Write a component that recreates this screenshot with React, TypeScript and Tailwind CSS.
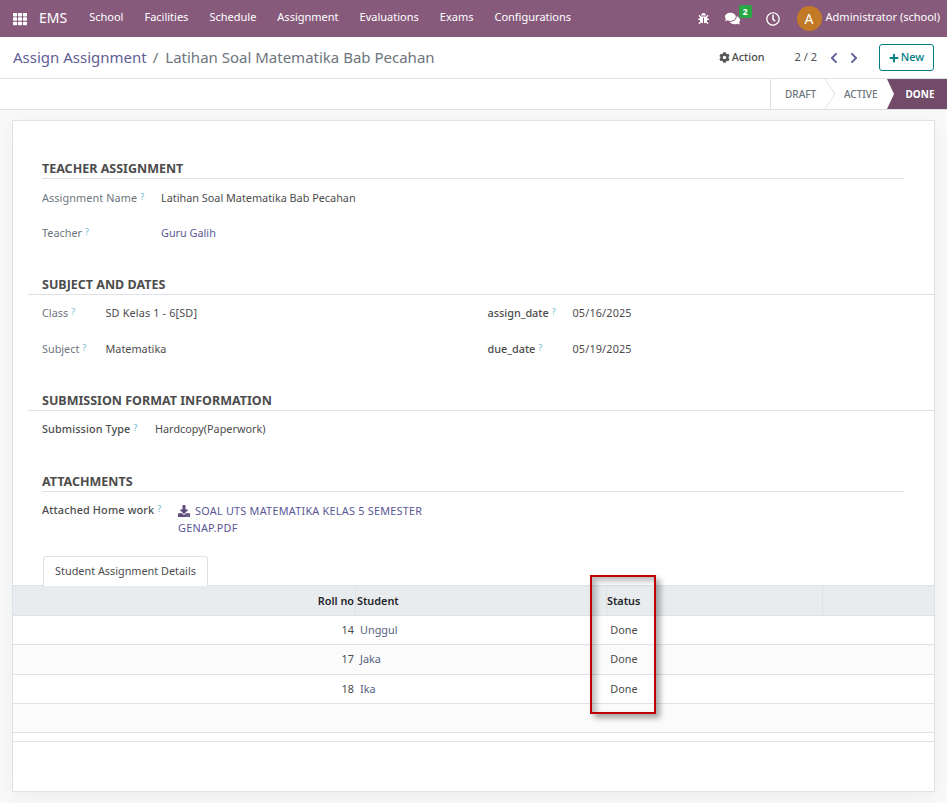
import React from "react";
import { FaCog, FaPlus, FaBug, FaComments, FaChevronLeft, FaChevronRight, FaTh, FaRegClock, FaDownload } from "react-icons/fa";

function Q() {
  return <sup className="text-[9px] text-[#6fb9d0] ml-[3px] relative -top-[2px] font-normal">?</sup>;
}

function SectionTitle({ children, wide }: { children: React.ReactNode; wide?: boolean }) {
  return (
    <div className={`h-[18px] border-b border-[#dee2e6] box-content text-[12.5px] leading-[18px] font-bold text-[#4c4c4c] ${wide ? "-ml-[14px] pl-[14px]" : "mr-[30px]"}`}>
      {children}
    </div>
  );
}

function Row({ roll, name, odd }: { roll: string; name: string; odd?: boolean }) {
  return (
    <div className={`flex h-[29.33px] items-center border-b border-[#dee2e6] text-[#4c4c4c] ${odd ? "bg-[#fbfbfb]" : "bg-white"}`}>
      <div className="w-[341px] text-right">{roll}</div>
      <div className="w-[238px] pl-[6px] text-[#555f80]">{name}</div>
      <div className="w-[60px] text-center -ml-[2px] pl-[8px]">Done</div>
    </div>
  );
}

export default function App() {
  return (
    <div className="relative w-[947px] h-[803px] overflow-hidden bg-[#f9f9f9] [font-family:'Noto_Sans',sans-serif] text-[10.85px] text-[#4c4c4c]">
      <header className="flex h-[37px] items-center bg-[#875a7b] text-[11px] text-white">
        <FaTh className="ml-[13px] w-[14px] h-[14px]" />
        <span className="ml-[12px] -mt-[2px] text-[14px]">EMS</span>
        <nav className="ml-[22px] -mt-[2px] flex gap-[21px]">
          <span>School</span><span>Facilities</span><span>Schedule</span><span>Assignment</span><span>Evaluations</span><span>Exams</span><span>Configurations</span>
        </nav>
        <div className="ml-auto flex items-center pr-[7px]">
          <FaBug className="w-[11px] h-[11px]" />
          <div className="relative ml-[16px]">
            <FaComments className="w-[15px] h-[15px]" />
            <span className="absolute -top-[6px] left-[14px] h-[13px] w-[13px] rounded-[2px] bg-[#28a745] text-center text-[9px] font-bold leading-[13px]">2</span>
          </div>
          <FaRegClock className="ml-[26px] w-[14px] h-[14px]" />
          <span className="ml-[17px] flex h-[25px] w-[25px] items-center justify-center rounded-full bg-[#c27a26] text-[14px]">A</span>
          <span className="ml-[4px] -mt-[2px]">Administrator (school)</span>
        </div>
      </header>

      <div className="flex h-[42px] items-center border-b border-[#dee2e6] bg-white pl-[13px] pr-[13px]">
        <span className="text-[15px] text-[#5f5e97]">Assign Assignment</span>
        <span className="ml-[6px] text-[15px] text-[#6c757d]">/</span>
        <span className="ml-[7px] text-[15px] text-[#6c757d]">Latihan Soal Matematika Bab Pecahan</span>
        <div className="ml-auto flex items-center">
          <FaCog className="w-[11px] h-[11px] text-[#555]" />
          <span className="ml-[2px] font-medium">Action</span>
          <span className="ml-[30px] text-[11px]">2 / 2</span>
          <FaChevronLeft className="ml-[12px] w-[10px] h-[12px] text-[#5f5e97]" />
          <FaChevronRight className="ml-[10px] w-[10px] h-[12px] text-[#5f5e97]" />
          <button className="ml-[20px] flex h-[27px] w-[55px] items-center justify-center rounded-[3px] border border-[#017e84] text-[11px] font-medium text-[#017e84]">
            <FaPlus className="mr-[2px] w-[10px] h-[10px]" />New
          </button>
        </div>
      </div>

      <div className="relative h-[31px] border-b border-[#dee2e6] bg-white">
        <div className="absolute left-[770px] top-0 h-[30px] w-[177px] border-l border-[#dee2e6] text-[10px] font-medium leading-[30px]">
          <span className="absolute left-[14px] text-[#6c757d]">DRAFT</span>
          <svg className="absolute left-[53px] top-0" width="13" height="30" viewBox="0 0 13 30"><path d="M1 0 L11 15 L1 30" fill="none" stroke="#dee2e6" /></svg>
          <span className="absolute left-[73px] text-[#6c757d]">ACTIVE</span>
          <div className="absolute left-[116px] top-0 h-[30px] w-[61px] bg-[#714b67] [clip-path:polygon(0_0,100%_0,100%_100%,0_100%,7px_50%)] text-center pl-[5px] font-bold text-white">DONE</div>
        </div>
      </div>

      <main className="absolute left-[12px] top-[120px] h-[672px] w-[923px] border border-[#dee2e6] bg-white shadow-[0_5px_20px_rgba(0,0,0,0.05)]">
        <div className="pl-[29px]">
          <div className="pt-[39px]"><SectionTitle>TEACHER ASSIGNMENT</SectionTitle></div>
          <div className="mt-[11px] flex h-[17px] items-center"><div className="w-[119px] tracking-[0.1px] text-[#6c757d]">Assignment Name<Q /></div><div>Latihan Soal Matematika Bab Pecahan</div></div>
          <div className="mt-[18px] flex h-[17px] items-center"><div className="w-[119px] text-[#6c757d]">Teacher<Q /></div><div className="text-[#5a5796]">Guru Galih</div></div>

          <div className="pt-[34px]"><SectionTitle wide>SUBJECT AND DATES</SectionTitle></div>
          <div className="mt-[10px] flex h-[17px] items-center">
            <div className="w-[63.5px] text-[#6c757d]">Class<Q /></div><div className="w-[382px] tracking-[0.15px]">SD Kelas 1 - 6[SD]</div>
            <div className="w-[85px] font-medium">assign_date<Q /></div><div className="tracking-[0.15px]">05/16/2025</div>
          </div>
          <div className="mt-[19px] flex h-[17px] items-center">
            <div className="w-[63.5px] text-[#6c757d]">Subject<Q /></div><div className="w-[382px]">Matematika</div>
            <div className="w-[85px] font-medium">due_date<Q /></div><div className="tracking-[0.15px]">05/19/2025</div>
          </div>

          <div className="pt-[34px]"><SectionTitle wide>SUBMISSION FORMAT INFORMATION</SectionTitle></div>
          <div className="mt-[10px] flex h-[17px] items-center"><div className="w-[113px] tracking-[0.1px] font-medium">Submission Type<Q /></div><div>Hardcopy(Paperwork)</div></div>

          <div className="pt-[35px]"><SectionTitle>ATTACHMENTS</SectionTitle></div>
          <div className="mt-[10px] flex">
            <div className="w-[136px] tracking-[0.15px] font-medium">Attached Home work<Q /></div>
            <div className="w-[262px] leading-[17px] tracking-[0.25px] text-[#5a5796]"><FaDownload className="inline w-[12px] h-[12px] mr-[5px] -mt-[3px] text-[#5f4b7a]" />SOAL UTS MATEMATIKA KELAS 5 SEMESTER GENAP.PDF</div>
          </div>
        </div>

        <div className="absolute left-[30px] top-[435px] z-10 h-[30px] w-[165px] rounded-t-[3px] border border-b-0 border-[#dee2e6] bg-white text-center leading-[28px]">Student Assignment Details</div>

        <div className="absolute left-0 right-0 top-[464px]">
          <div className="flex h-[31px] items-center border-y border-[#dee2e6] bg-[#e9ecef] font-semibold text-[#212529]">
            <div className="h-full w-[343px] border-r border-[#dee2e6] text-right leading-[29px]"><span className="pr-[1px]">Roll no</span></div>
            <div className="h-full w-[250px] pl-[1px] leading-[29px]">Student</div>
            <div className="h-full w-[216px] border-l border-[#dee2e6] leading-[29px]">Status</div>
            <div className="h-full flex-1 border-l border-[#dee2e6]"></div>
          </div>
          <Row roll="14" name="Unggul" />
          <Row roll="17" name="Jaka" odd />
          <Row roll="18" name="Ika" />
          <div className="h-[29px] border-b border-[#dee2e6] bg-[#fbfbfb]"></div>
          <div className="h-[9px] border-b border-[#dee2e6]"></div>
        </div>
      </main>

      <div className="absolute left-[590px] top-[575px] h-[139px] w-[66px] border-[2px] border-[#c00000] shadow-[4px_4px_6px_rgba(0,0,0,0.35),inset_4px_4px_6px_rgba(0,0,0,0.28)]"></div>
    </div>
  );
}
